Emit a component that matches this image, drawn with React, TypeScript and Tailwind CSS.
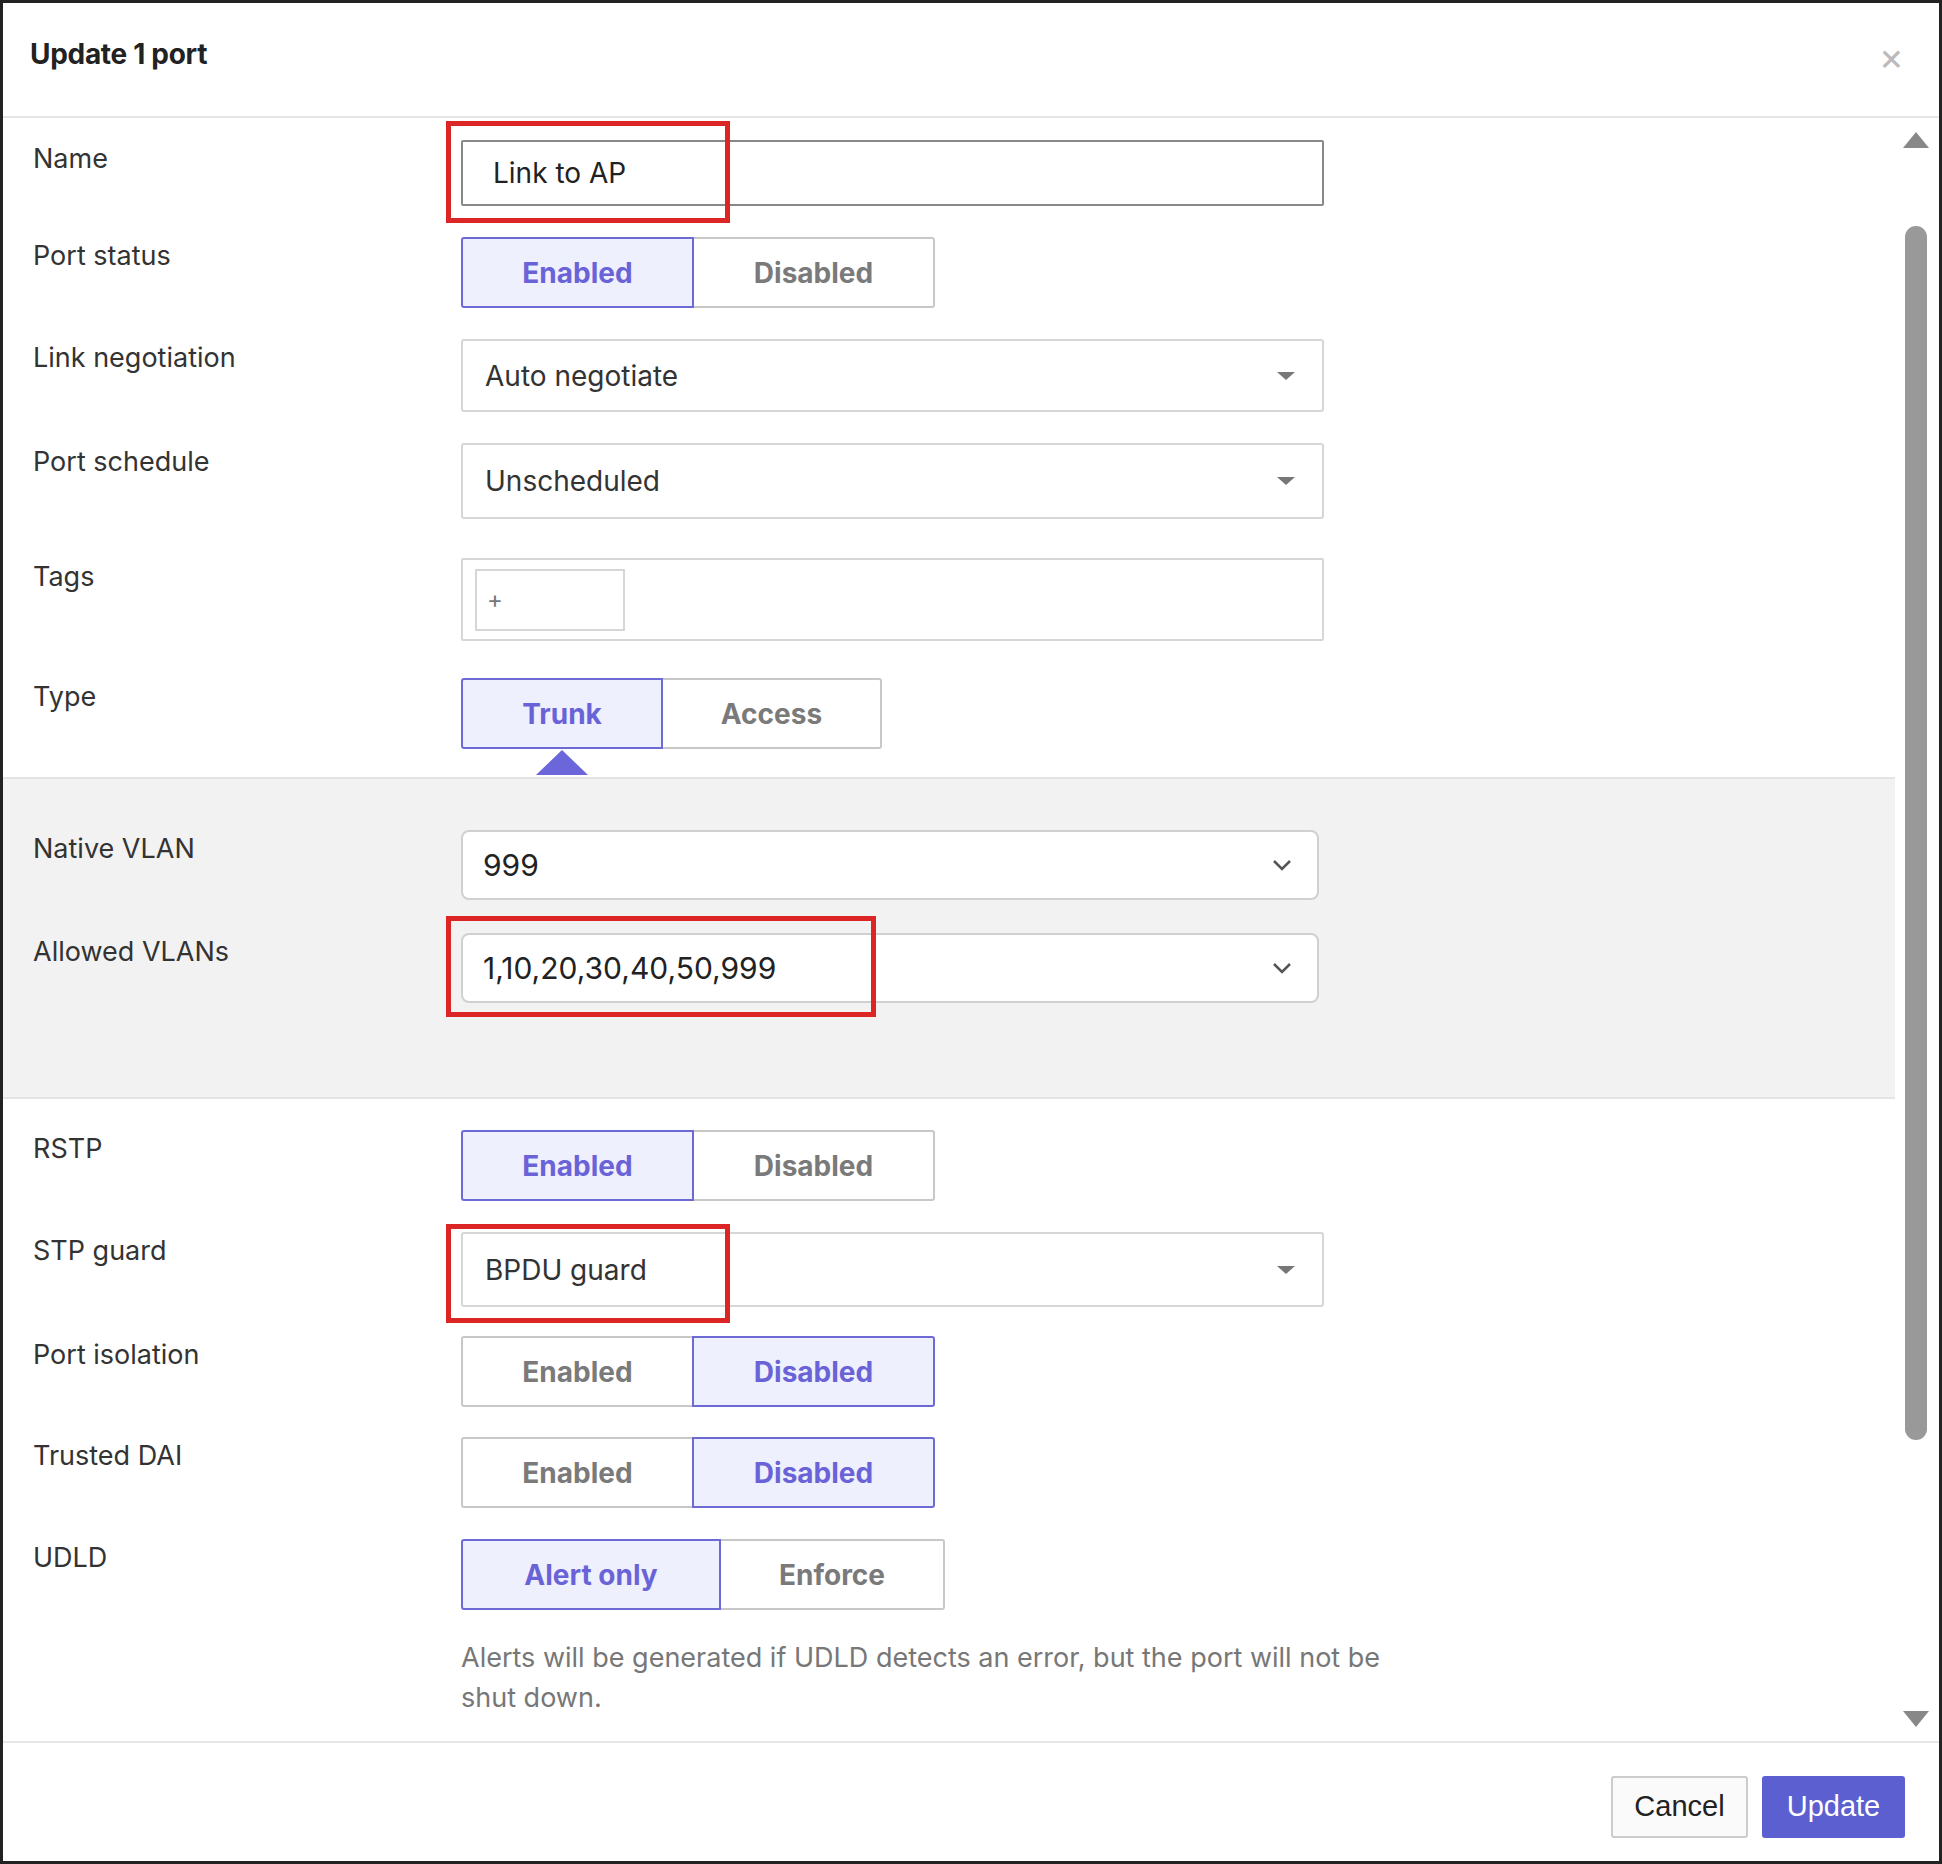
import React from "react";

const F = { fontFamily: "Inter, 'Noto Sans', sans-serif" };

function Seg({ a, b, active, w1, w2 }: { a: string; b: string; active: 0 | 1; w1: number; w2: number }) {
  const on = "bg-[#eef0fd] border-[#6d6ad6] text-[#6a63d8] z-10";
  const off = "bg-white border-[#c8c8c8] text-[#7a7a7a]";
  return (
    <div className="flex h-[71px]">
      <div style={{ width: w1 }} className={`relative flex items-center justify-center border-2 rounded-l-[3px] text-[28px] font-bold ${active === 0 ? on : off}`}>{a}</div>
      <div style={{ width: w2 }} className={`relative -ml-[2px] flex items-center justify-center border-2 rounded-r-[3px] text-[28px] font-bold ${active === 1 ? on : off}`}>{b}</div>
    </div>
  );
}

function Row({ label, mt, children }: { label: string; mt: number; children: React.ReactNode }) {
  return (
    <div className="flex" style={{ marginTop: mt }}>
      <div className="w-[458px] pl-[30px] pt-[3px] text-[27px] leading-[32px] text-[#333]">{label}</div>
      <div className="relative">{children}</div>
    </div>
  );
}

function Caret() {
  return <svg width="20" height="10" viewBox="0 0 20 10"><path d="M1 1h18l-9 8z" fill="#777" /></svg>;
}

function Select({ text, h }: { text: string; h: number }) {
  return (
    <div style={{ height: h }} className="w-[863px] flex items-center justify-between border-2 border-[#d6d6d6] rounded-[3px] pl-[22px] pr-[26px] text-[28px] text-[#333] bg-white">
      <span>{text}</span>
      <Caret />
    </div>
  );
}

function VSelect({ text }: { text: string }) {
  return (
    <div className="w-[858px] h-[70px] flex items-center justify-between border-2 border-[#d0d0d0] rounded-[8px] pl-[20px] pr-[24px] text-[30px] text-[#222] bg-white">
      <span>{text}</span>
      <svg width="22" height="14" viewBox="0 0 22 14"><path d="M3 3l8 8 8-8" stroke="#555" strokeWidth="2.5" fill="none" /></svg>
    </div>
  );
}

function Red({ l, t, w, h }: { l: number; t: number; w: number; h: number }) {
  return <div className="absolute border-[5px] border-[#dc2626] z-20 pointer-events-none" style={{ left: l, top: t, width: w, height: h }} />;
}

export default function App() {
  return (
    <div style={F} className="w-[1942px] h-[1864px] bg-white border-[3px] border-[#222] flex flex-col overflow-hidden">
      <div className="h-[115px] shrink-0 flex items-start justify-between border-b-2 border-[#e6e6e6] px-[27px] pt-[30px]">
        <div className="text-[28px] font-bold text-[#222] tracking-[-0.3px]">Update 1 port</div>
        <div className="text-[38px] leading-[38px] text-[#bbb] mr-[8px] mt-[4px]">×</div>
      </div>
      <div className="flex-1 flex">
        <div className="w-[1892px] flex flex-col">
          <Row label="Name" mt={22}>
            <div className="w-[863px] h-[66px] border-2 border-[#888] rounded-[2px] pl-[30px] flex items-center text-[28px] text-[#222]">Link to AP</div>
            <Red l={-15} t={-19} w={284} h={102} />
          </Row>
          <Row label="Port status" mt={31}><Seg a="Enabled" b="Disabled" active={0} w1={233} w2={243} /></Row>
          <Row label="Link negotiation" mt={31}><Select text="Auto negotiate" h={73} /></Row>
          <Row label="Port schedule" mt={31}><Select text="Unscheduled" h={76} /></Row>
          <Row label="Tags" mt={39}>
            <div className="w-[863px] h-[83px] border-2 border-[#d6d6d6] rounded-[2px] flex items-center pl-[12px]">
              <div className="w-[150px] h-[62px] border-2 border-[#d6d6d6] flex items-center pl-[10px] text-[24px] text-[#777]">+</div>
            </div>
          </Row>
          <Row label="Type" mt={37}>
            <Seg a="Trunk" b="Access" active={0} w1={202} w2={221} />
            <svg className="absolute left-[75px] top-[72px]" width="52" height="25" viewBox="0 0 52 25"><path d="M0 25L26 0l26 25z" fill="#6b66d9" /></svg>
          </Row>
          <div className="mt-[28px] h-[322px] bg-[#f2f2f2] border-y-2 border-[#e4e4e4] pt-[51px] flex flex-col">
            <Row label="Native VLAN" mt={0}><VSelect text="999" /></Row>
            <Row label="Allowed VLANs" mt={33}>
              <VSelect text="1,10,20,30,40,50,999" />
              <Red l={-15} t={-17} w={430} h={101} />
            </Row>
          </div>
          <Row label="RSTP" mt={31}><Seg a="Enabled" b="Disabled" active={0} w1={233} w2={243} /></Row>
          <Row label="STP guard" mt={31}>
            <Select text="BPDU guard" h={75} />
            <Red l={-15} t={-8} w={284} h={99} />
          </Row>
          <Row label="Port isolation" mt={29}><Seg a="Enabled" b="Disabled" active={1} w1={233} w2={243} /></Row>
          <Row label="Trusted DAI" mt={30}><Seg a="Enabled" b="Disabled" active={1} w1={233} w2={243} /></Row>
          <Row label="UDLD" mt={31}>
            <div>
              <Seg a="Alert only" b="Enforce" active={0} w1={260} w2={226} />
              <div className="mt-[28px] w-[980px] text-[27px] leading-[40px] text-[#777]">Alerts will be generated if UDLD detects an error, but the port will not be shut down.</div>
            </div>
          </Row>
        </div>
        <div className="w-[43px] relative">
          <svg className="absolute left-[8px] top-[14px]" width="26" height="16" viewBox="0 0 26 16"><path d="M0 16L13 0l13 16z" fill="#888" /></svg>
          <div className="absolute left-[10px] top-[108px] w-[22px] h-[1214px] rounded-full bg-[#999]" />
          <svg className="absolute left-[8px] top-[1593px]" width="26" height="16" viewBox="0 0 26 16"><path d="M0 0h26L13 16z" fill="#888" /></svg>
        </div>
      </div>
      <div className="h-[120px] shrink-0 border-t-2 border-[#e6e6e6] flex items-start justify-end gap-[14px] pr-[34px] pt-[33px]" style={{ fontFamily: "'Liberation Sans', Arial, sans-serif" }}>
        <div className="w-[137px] h-[62px] border-2 border-[#ccc] rounded-[3px] bg-[#fafafa] flex items-center justify-center text-[29px] text-[#222]">Cancel</div>
        <div className="w-[143px] h-[62px] rounded-[3px] bg-[#5b5fd0] flex items-center justify-center text-[29px] text-white">Update</div>
      </div>
    </div>
  );
}
